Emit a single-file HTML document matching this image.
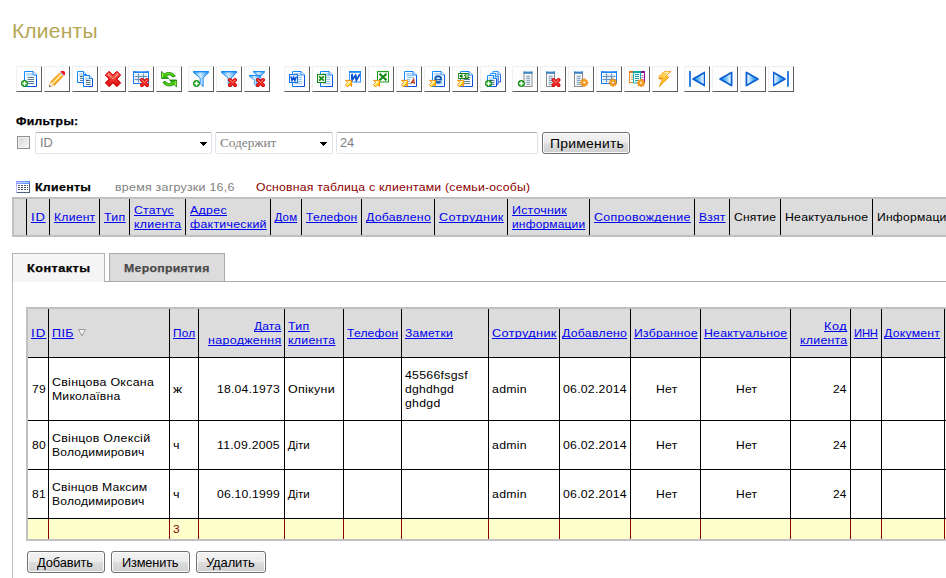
<!DOCTYPE html>
<html><head><meta charset="utf-8"><title>Клиенты</title>
<style>
html,body{margin:0;padding:0;background:#fff}
body{width:946px;height:578px;position:relative;overflow:hidden;font-family:"Liberation Sans",sans-serif}
.a,.t,.b,.vl,.hl{position:absolute}
.t{white-space:nowrap;transform-origin:0 0;text-decoration-skip-ink:none}
.b{width:24px;height:24px;top:66px;background:#fdfdfd;border:1px solid;border-color:#f0f0f0 #5e5e5e #5e5e5e #f0f0f0}
.b svg{position:absolute;left:4px;top:4px;width:16px;height:16px}
.vl{width:1px;background:#000}
.hl{height:1px;background:#000}
.rl{background:#8b0000}
.inp{position:absolute;top:132px;height:20px;border:1px solid;border-color:#abadb3 #dbdfe6 #e3e9ef #e2e3ea;border-radius:2px;background:#fff}
.btn{position:absolute;height:20px;border:1px solid #707070;border-radius:3px;box-shadow:inset 0 0 0 1px rgba(255,255,255,.85);background:linear-gradient(#f3f3f3 0%,#ebebeb 48%,#dddddd 52%,#cfcfcf 100%)}
.arr{position:absolute;width:0;height:0;border-left:3.5px solid transparent;border-right:3.5px solid transparent;border-top:4px solid #000;top:142px}
</style></head><body>
<!-- toolbar -->
<svg width="0" height="0" style="position:absolute;left:0;top:0"><defs>
<linearGradient id="gp" x1="0" y1="0" x2="1" y2="1"><stop offset="0" stop-color="#1e94ff"/><stop offset=".5" stop-color="#0a74f4"/><stop offset="1" stop-color="#0a44d2"/></linearGradient>
<linearGradient id="gpf" x1="0" y1="0" x2="0" y2="1"><stop offset="0" stop-color="#a6d3fb"/><stop offset="1" stop-color="#e6f3ff"/></linearGradient>
<linearGradient id="gx" x1="0" y1="0" x2="0" y2="1"><stop offset="0" stop-color="#ff8a78"/><stop offset=".5" stop-color="#f23a30"/><stop offset="1" stop-color="#d40a0a"/></linearGradient>
<linearGradient id="gg" x1="0" y1="0" x2="0" y2="1"><stop offset="0" stop-color="#8cf02a"/><stop offset=".5" stop-color="#4ccc08"/><stop offset="1" stop-color="#2aa800"/></linearGradient>
<linearGradient id="gf" x1="0" y1="0" x2="1" y2="0"><stop offset="0" stop-color="#2a9af5"/><stop offset=".45" stop-color="#d2ecff"/><stop offset="1" stop-color="#2a94ee"/></linearGradient>
<linearGradient id="ga" x1="0" y1="0" x2="1" y2="1"><stop offset=".1" stop-color="#ffb21a"/><stop offset=".4" stop-color="#fffbe0"/><stop offset=".6" stop-color="#ffdc00"/><stop offset=".95" stop-color="#f59000"/></linearGradient>
<linearGradient id="gpb" x1="0" y1="0" x2="0" y2="1"><stop offset="0" stop-color="#f08c00"/><stop offset=".3" stop-color="#ffc040"/><stop offset=".5" stop-color="#fff0b8"/><stop offset=".72" stop-color="#ffb42a"/><stop offset="1" stop-color="#ea8200"/></linearGradient>
<linearGradient id="gx2" gradientUnits="userSpaceOnUse" x1="-5" y1="-5" x2="5" y2="5"><stop offset="0" stop-color="#ff9080"/><stop offset=".45" stop-color="#f4403a"/><stop offset="1" stop-color="#cc0808"/></linearGradient>
<linearGradient id="gl" x1="0" y1="0" x2="1" y2="1"><stop offset="0" stop-color="#ffe27a"/><stop offset=".5" stop-color="#ffc02a"/><stop offset="1" stop-color="#ee8800"/></linearGradient>
<linearGradient id="gc" x1="0" y1="0" x2="0" y2="1"><stop offset="0" stop-color="#62aee6"/><stop offset="1" stop-color="#1a68b4"/></linearGradient>
<linearGradient id="gpe" x1="0" y1="0" x2="1" y2="1"><stop offset=".36" stop-color="#f39000"/><stop offset=".44" stop-color="#ffbe3a"/><stop offset=".5" stop-color="#fff2c0"/><stop offset=".57" stop-color="#ffb82e"/><stop offset=".64" stop-color="#ee8600"/></linearGradient>
<linearGradient id="gn" x1="0" y1="0" x2="1" y2="0"><stop offset="0" stop-color="#1f8ff0"/><stop offset=".45" stop-color="#5ab4f8"/><stop offset=".8" stop-color="#cfe9ff"/><stop offset="1" stop-color="#e8f5ff"/></linearGradient>
<radialGradient id="ggr" cx=".5" cy=".4" r=".6"><stop offset="0" stop-color="#ffb52e"/><stop offset="1" stop-color="#ee8200"/></radialGradient>
<g id="page"><path d="M.5.5H9L12.5 4V15.5H.5Z" fill="#fff" stroke="url(#gp)"/><path d="M2 2H8.5V5L11 5.5V14H2Z" fill="#f3f9ff"/><rect x="2" y="2" width="6.5" height="4" fill="url(#gpf)"/><path d="M9 .5V4H12.5" fill="#fff" stroke="#1a82f7"/><path d="M3.5 6.5H10M3.5 8.5H10M3.5 10.5H10M3.5 12.5H10" stroke="#5e7f90" stroke-width="1" fill="none"/></g>
<g id="lpage"><path d="M.5.5H9L12.5 4V15.5H.5Z" fill="#fff" stroke="url(#gp)"/><path d="M2 2H8.5V5L11 5.5V14H2Z" fill="#eef7ff"/><rect x="2" y="2" width="6.5" height="4" fill="url(#gpf)"/><path d="M9 .5V4H12.5" fill="#fff" stroke="#1a82f7"/><path d="M3 4.5H10M3 6.5H10M3 8.5H10M3 10.5H10M3 12.5H10" stroke="#86bde8" stroke-width=".8" fill="none"/></g>
<g id="spage"><path d="M.5.5H6.5L9.5 3.5V11.5H.5Z" fill="#fff" stroke="url(#gp)"/><rect x="2" y="2" width="6" height="8" fill="#e2f1fd"/><rect x="2" y="2" width="4" height="3" fill="#bfe0fb"/><path d="M6.5 .5V3.5H9.5" fill="#fff" stroke="#1a82f7"/><path d="M3 5.5H7.5M3 7.5H7.5M3 9.5H7.5" stroke="#5e7f90" fill="none"/><path d="M3 5.5H5" stroke="#4a5560"/></g>
<g id="plus"><circle cx="3.5" cy="3.5" r="3.05" fill="#1db61d" stroke="#087a08" stroke-width="1"/><path d="M3.5 1.3V5.7M1.3 3.5H5.7" stroke="#fff" stroke-width="1.35"/></g>
<g id="rx"><path d="M1.9 1.9L7.1 7.1M7.1 1.9L1.9 7.1" stroke="#cf0606" stroke-width="3.7" stroke-linecap="round"/><path d="M2 2L7 7M7 2L2 7" stroke="#ef2c26" stroke-width="2.2" stroke-linecap="round"/><path d="M2 2L4.5 4.4L7 2" stroke="#ff8a7c" stroke-width="1" stroke-linecap="round" fill="none"/></g>
<g id="arrow"><path d="M.5 .5H6.6V6.6L4.9 4.7L2.5 7.1L.3 4.9L2.7 2.5Z" fill="url(#ga)" stroke="#f08800" stroke-width=".9" stroke-linejoin="round"/></g>
<g id="funnel"><path d="M.5 .5H15.5V1.6L10.2 7V15.6L7.2 12.6V7L.5 1.6Z" fill="url(#gf)" stroke="#1585ee" stroke-width=".9" stroke-linejoin="round"/><path d="M.5 .8H15.5" stroke="#1488f2" stroke-width="1.2"/></g>
<g id="col"><rect x=".5" y="2" width="8" height="13.5" fill="#fbfdff" stroke="#8c8c8c"/><rect x="2" y="4" width="5" height="10" fill="#d4eafb"/><path d="M3 5.5H6.5M3 7.5H6.5M3 9.5H6.5M3 11.5H6.5M3 13.5H6.5" stroke="#98a2aa"/><path d="M0 0Q4.5 1.2 9 0V2.6H0Z" fill="url(#gc)"/></g>
<g id="table"><rect x=".5" y="1" width="15" height="11.5" fill="#fff" stroke="#1a7cf2"/><path d="M0 0Q8 1.4 16 0V2H0Z" fill="#1a86fa"/><rect x="2" y="3" width="12" height="8" fill="#cfe6fb"/><path d="M2 4.2H14M2 7H14M2 9.8H14M3.8 3V11M8 3V11M12.5 3V11" stroke="#eef7ff" stroke-width=".6"/><path d="M5.5 2.5V11.5M10.5 2.5V11.5M1.5 5.5H14.5M1.5 8.5H14.5" stroke="#6b93b8"/></g>
<g id="gear"><path d="M7.84 3.33 L7.84 4.67 L6.71 4.70 L6.41 5.43 L7.19 6.24 L6.24 7.19 L5.43 6.41 L4.70 6.71 L4.67 7.84 L3.33 7.84 L3.30 6.71 L2.57 6.41 L1.76 7.19 L0.81 6.24 L1.59 5.43 L1.29 4.70 L0.16 4.67 L0.16 3.33 L1.29 3.30 L1.59 2.57 L0.81 1.76 L1.76 0.81 L2.57 1.59 L3.30 1.29 L3.33 0.16 L4.67 0.16 L4.70 1.29 L5.43 1.59 L6.24 0.81 L7.19 1.76 L6.41 2.57 L6.71 3.30Z" fill="url(#ggr)" stroke="#ee8a0a" stroke-width=".6" stroke-linejoin="round"/><circle cx="4" cy="4" r="1.45" fill="#fffaf0" stroke="#e07a00" stroke-width=".5"/></g>
<g id="wbox"><rect x=".5" y=".5" width="8" height="8" fill="#eef6ff" stroke="#1a74e8"/><path d="M2 2.4L3 6.6L4.6 3.2L5.9 6.6L7.4 2.4" fill="none" stroke="#0b52d2" stroke-width="1.5" stroke-linejoin="miter"/></g>
<g id="xbox"><rect x=".5" y=".5" width="8" height="8" fill="#f2fbf0" stroke="#1a8a1a"/><path d="M2.2 2.4L6.8 6.6M6.8 2.4L2.2 6.6" fill="none" stroke="#1a8a1a" stroke-width="1.7"/></g>
<g id="tri"><path d="M14.2 1.4V14.6L2.6 8Z" fill="url(#gn)" stroke="#0b5fd2" stroke-width="1.7" stroke-linejoin="round"/></g>
</defs></svg>
<div class="b" style="left:16px"><svg viewBox="0 0 16 16"><use href="#page" transform="translate(3,0)"/><use href="#plus" transform="translate(0,9)"/></svg></div>
<div class="b" style="left:44px"><svg viewBox="0 0 16 16"><g transform="translate(0,16) rotate(-45)"><path d="M0 0L4.6 -2.7V2.7Z" fill="#ffe4c4" stroke="#e8b080" stroke-width=".3"/><path d="M0 0L1.7 -1V1Z" fill="#3a2a1a"/><rect x="4.6" y="-2.7" width="12.9" height="5.4" fill="url(#gpb)"/><rect x="17.5" y="-2.7" width="1.4" height="5.4" fill="#c2c2cc"/><path d="M18.9 -2.7H20Q21.8 -2.7 21.8 0Q21.8 2.7 20 2.7H18.9Z" fill="#ee1212"/></g></svg></div>
<div class="b" style="left:72px"><svg viewBox="0 0 16 16"><use href="#spage"/><use href="#spage" transform="translate(6,4)"/></svg></div>
<div class="b" style="left:100px"><svg viewBox="0 0 16 16"><g transform="translate(8,8) rotate(45)"><path d="M-8.7 -2.9h17.4a0 0 0 0 1 0 0v5.8h-17.4zM-2.9 -8.7h5.8v17.4h-5.8z" fill="#de0404" stroke="#de0404" stroke-width="1" stroke-linejoin="round" transform="scale(.94)"/><path d="M-7.2 -1.7h14.4v3.4h-14.4zM-1.7 -7.2h3.4v14.4h-3.4z" fill="url(#gx2)" stroke="url(#gx2)" stroke-width=".8" stroke-linejoin="round"/></g><path d="M3 3.2L8 8L13 3.2" stroke="#ffb0a0" stroke-width="1" fill="none" opacity=".6"/></svg></div>
<div class="b" style="left:128px"><svg viewBox="0 0 16 16"><use href="#table"/><use href="#rx" transform="translate(7,7)"/></svg></div>
<div class="b" style="left:156px"><svg viewBox="0 0 16 16"><path d="M.6 .4V7.4H7.7L5.4 5.2C7.2 3.3 10.2 3.4 11.6 6L14.2 5.2C12 .9 6.6 .5 3.2 3Z" fill="url(#gg)" stroke="#0c7c00" stroke-width=".8" stroke-linejoin="round"/><path d="M1.5 2.2V6.4" stroke="#b8ff70" stroke-width=".8"/><g transform="rotate(180 8.1 8.2)"><path d="M.6 .4V7.4H7.7L5.4 5.2C7.2 3.3 10.2 3.4 11.6 6L14.2 5.2C12 .9 6.6 .5 3.2 3Z" fill="url(#gg)" stroke="#0c7c00" stroke-width=".8" stroke-linejoin="round"/><path d="M1.5 2.2V6.4" stroke="#b8ff70" stroke-width=".8"/></g></svg></div>
<div class="b" style="left:188px"><svg viewBox="0 0 16 16"><use href="#funnel"/><use href="#plus" transform="translate(0,9)"/></svg></div>
<div class="b" style="left:216px"><svg viewBox="0 0 16 16"><use href="#funnel"/><use href="#rx" transform="translate(7,7)"/></svg></div>
<div class="b" style="left:244px"><svg viewBox="0 0 16 16"><use href="#funnel" transform="translate(4,0) scale(.75)"/><use href="#funnel" transform="translate(0,4) scale(.75)"/><use href="#rx" transform="translate(7,7)"/></svg></div>
<div class="b" style="left:284px"><svg viewBox="0 0 16 16"><use href="#lpage" transform="translate(3,0)"/><use href="#wbox" transform="translate(0,3)"/></svg></div>
<div class="b" style="left:312px"><svg viewBox="0 0 16 16"><use href="#lpage" transform="translate(3,0)"/><use href="#xbox" transform="translate(0,3)"/></svg></div>
<div class="b" style="left:340px"><svg viewBox="0 0 16 16"><rect x="4.5" y=".5" width="11" height="10.5" fill="#fff" stroke="#3a94fa"/><rect x="4" y="0" width="12" height="1.8" fill="#1a86fa"/><path d="M6.2 3L7.6 9L10 4.5L12 9L14.2 3" fill="none" stroke="#0b52d2" stroke-width="2" stroke-linejoin="miter" transform="translate(1.4,0) skewX(-12)"/><use href="#arrow" transform="translate(0,8.9)"/></svg></div>
<div class="b" style="left:368px"><svg viewBox="0 0 16 16"><rect x="4.5" y=".5" width="11" height="10.5" fill="#fff" stroke="#1a9a1a"/><rect x="4" y="0" width="12" height="1.2" fill="#22a822"/><path d="M6.5 2.8L13.5 9.2M13.5 2.8L6.5 9.2" fill="none" stroke="#148a14" stroke-width="2.2"/><use href="#arrow" transform="translate(0,8.9)"/></svg></div>
<div class="b" style="left:396px"><svg viewBox="0 0 16 16"><use href="#lpage" transform="translate(3,0)"/><rect x="9" y="7.6" width="5.6" height="6.2" fill="#fff" opacity=".85"/><path d="M9.6 13L12.7 8.2L13.4 13M10.7 11.3H13.2" fill="none" stroke="#c4361c" stroke-width="1.25"/><use href="#arrow" transform="translate(0,8.9)"/></svg></div>
<div class="b" style="left:424px"><svg viewBox="0 0 16 16"><use href="#lpage" transform="translate(3,0)"/><rect x="5" y="4" width="8.5" height="9.5" fill="#e4f2fe"/><circle cx="9.2" cy="8.3" r="3" fill="none" stroke="#1a5fb4" stroke-width="1.9"/><path d="M6.4 8.6H12.4" stroke="#1a5fb4" stroke-width="1.3"/><path d="M10.4 9.4H13.4V11.4Z" fill="#e4f2fe"/><path d="M6 12Q9.5 13.6 13 11.6" stroke="#3a9ae8" stroke-width="1" fill="none"/><use href="#arrow" transform="translate(0,8.9)"/></svg></div>
<div class="b" style="left:452px"><svg viewBox="0 0 16 16"><use href="#page" transform="translate(3,0)"/><rect x="1" y="2" width="10.8" height="6" rx=".6" fill="#137f13"/><path d="M0 0h1v1h-1zM1 0h1v1h-1zM2 0h1v1h-1zM0 1h1v1h-1zM0 2h1v1h-1zM0 3h1v1h-1zM1 3h1v1h-1zM2 3h1v1h-1zM4 0h1v1h-1zM5 0h1v1h-1zM6 0h1v1h-1zM4 1h1v1h-1zM5 1h1v1h-1zM5 2h1v1h-1zM6 2h1v1h-1zM4 3h1v1h-1zM5 3h1v1h-1zM6 3h1v1h-1zM8 0h1v1h-1zM10 0h1v1h-1zM8 1h1v1h-1zM10 1h1v1h-1zM8 2h1v1h-1zM10 2h1v1h-1zM9 3h1v1h-1z" fill="#fff" transform="translate(1.8,3) scale(.86,1)"/><use href="#arrow" transform="translate(0,8.9)"/></svg></div>
<div class="b" style="left:480px"><svg viewBox="0 0 16 16"><g transform="translate(7.5,0) scale(.85 .95)"><use href="#spage"/></g><g transform="translate(5,2) scale(.85 .98)"><use href="#spage"/></g><use href="#spage" transform="translate(2,4)"/><use href="#plus" transform="translate(0,9)"/></svg></div>
<div class="b" style="left:512px"><svg viewBox="0 0 16 16"><use href="#col" transform="translate(6.5,0)"/><use href="#plus" transform="translate(0.8,9)"/></svg></div>
<div class="b" style="left:540px"><svg viewBox="0 0 16 16"><use href="#col" transform="translate(1,0)"/><use href="#rx" transform="translate(6.5,7)"/></svg></div>
<div class="b" style="left:568px"><svg viewBox="0 0 16 16"><use href="#col" transform="translate(1,0)"/><use href="#gear" transform="translate(7.2,7.6)"/></svg></div>
<div class="b" style="left:596px"><svg viewBox="0 0 16 16"><use href="#table"/><use href="#gear" transform="translate(8,7.6)"/></svg></div>
<div class="b" style="left:624px"><svg viewBox="0 0 16 16"><rect x=".5" y=".5" width="5" height="11" fill="#fff" stroke="#f08a20"/><rect x="0" y="0" width="6" height="2" fill="#e87a18"/><path d="M2 4.5H4M2 6.5H4M2 8.5H4" stroke="#f0a050"/><rect x="11.5" y=".5" width="4" height="11" fill="#fff" stroke="#9a1096"/><rect x="11" y="0" width="5" height="2" fill="#8a0f8e"/><path d="M12.5 4.5H14.5M12.5 6.5H14.5M12.5 8.5H14.5" stroke="#c060c0"/><rect x="4.5" y=".5" width="7" height="11.5" fill="#e6ffff" stroke="#12b4b4"/><rect x="4" y="0" width="8" height="2" fill="#0fa6a6"/><path d="M6 3.5H10M6 5.5H10M6 7.5H10M6 9.5H10" stroke="#2a9a9a" stroke-width="1.1"/><use href="#gear" transform="translate(8,8)"/></svg></div>
<div class="b" style="left:652px"><svg viewBox="0 0 16 16"><path d="M7.2 .4H14L8.8 5.2L12 6L2.2 15.8L5.4 8H2V5.6Z" fill="url(#gl)" stroke="#f08a00" stroke-width=".7" stroke-linejoin="round"/><path d="M7.6 1.4H11.6L7.2 5.4" stroke="#fff6c8" stroke-width="1" fill="none"/><path d="M2 7.4H5.8" stroke="#d87400" stroke-width=".8"/></svg></div>
<div class="b" style="left:684px"><svg viewBox="0 0 16 16"><rect x=".3" y=".3" width="1.5" height="15.4" fill="#1474e2" stroke="#0d5fd0" stroke-width=".4"/><use href="#tri" transform="translate(1.4,0)"/></svg></div>
<div class="b" style="left:712px"><svg viewBox="0 0 16 16"><use href="#tri" transform="translate(0.4,0)"/></svg></div>
<div class="b" style="left:740px"><svg viewBox="0 0 16 16"><g transform="translate(15.6,0) scale(-1,1)"><use href="#tri"/></g></svg></div>
<div class="b" style="left:768px"><svg viewBox="0 0 16 16"><g transform="translate(14.6,0) scale(-1,1)"><use href="#tri"/></g><rect x="14.2" y=".3" width="1.5" height="15.4" fill="#1474e2" stroke="#0d5fd0" stroke-width=".4"/></svg></div>

<!-- filter row -->
<div class="a" style="left:17px;top:136px;width:11px;height:11px;border:1px solid #8e8f8f;background:linear-gradient(135deg,#d6d6d6,#f6f6f6);box-shadow:inset 0 0 0 1px #f4f4f4"></div>
<div class="inp" style="left:35px;width:175px"></div><svg class="a" style="left:200px;top:142px" width="7" height="4" shape-rendering="crispEdges"><path d="M0 0h7v1h-1v1h-1v1h-1v1h-1v-1h-1v-1h-1v-1h-1z" fill="#000"/></svg>
<div class="inp" style="left:215px;width:116px"></div><svg class="a" style="left:320px;top:142px" width="7" height="4" shape-rendering="crispEdges"><path d="M0 0h7v1h-1v1h-1v1h-1v1h-1v-1h-1v-1h-1v-1h-1z" fill="#000"/></svg>
<div class="inp" style="left:336px;width:200px"></div>
<div class="btn" style="left:542px;top:132px;width:86px"></div>
<!-- table icon -->
<svg class="a" style="left:16px;top:181px" width="14" height="12" viewBox="0 0 14 12" shape-rendering="crispEdges"><defs><linearGradient id="tig" x1="0" y1="0" x2="1" y2="0"><stop offset="0" stop-color="#9c96ff"/><stop offset=".5" stop-color="#6aa0ff"/><stop offset="1" stop-color="#4a84ff"/></linearGradient></defs><rect width="14" height="12" fill="#fff"/><rect width="14" height="3" fill="url(#tig)"/><rect x="1" y="1" width="12" height="1" fill="#cfdcff" opacity=".8"/><rect x="0" y="3" width="1" height="9" fill="#b8b8fa"/><rect x="13" y="3" width="1" height="9" fill="#4f637a"/><rect x="1" y="11" width="13" height="1" fill="#4f637a"/><g fill="#4a5a70"><rect x="2" y="4" width="2" height="1"/><rect x="5" y="4" width="2" height="1"/><rect x="8" y="4" width="2" height="1"/><rect x="11" y="4" width="1" height="1"/><rect x="2" y="6" width="2" height="1"/><rect x="5" y="6" width="2" height="1"/><rect x="8" y="6" width="2" height="1"/><rect x="11" y="6" width="1" height="1"/><rect x="2" y="8" width="2" height="1"/><rect x="5" y="8" width="2" height="1"/><rect x="8" y="8" width="2" height="1"/><rect x="11" y="8" width="1" height="1"/></g></svg>
<!-- main table -->
<div class="a" style="left:12px;top:197px;width:940px;height:36px;background:#dcdcdc;border:2px solid #c0c0c0"></div>
<div class="vl" style="left:26px;top:199px;height:36px"></div><div class="vl" style="left:49px;top:199px;height:36px"></div><div class="vl" style="left:99px;top:199px;height:36px"></div><div class="vl" style="left:129px;top:199px;height:36px"></div><div class="vl" style="left:185px;top:199px;height:36px"></div><div class="vl" style="left:270px;top:199px;height:36px"></div><div class="vl" style="left:301px;top:199px;height:36px"></div><div class="vl" style="left:361px;top:199px;height:36px"></div><div class="vl" style="left:434px;top:199px;height:36px"></div><div class="vl" style="left:507px;top:199px;height:36px"></div><div class="vl" style="left:589px;top:199px;height:36px"></div><div class="vl" style="left:694px;top:199px;height:36px"></div><div class="vl" style="left:729px;top:199px;height:36px"></div><div class="vl" style="left:780px;top:199px;height:36px"></div><div class="vl" style="left:872px;top:199px;height:36px"></div>
<!-- tabs -->
<div class="a" style="left:12px;top:281px;width:940px;height:300px;border:1px solid #bbb;border-top-color:#aaa;background:#fff"></div>
<div class="a" style="left:109px;top:253px;width:114px;height:27px;border:1px solid #aaa;background:#dcdcdc"></div>
<div class="a" style="left:12px;top:253px;width:91px;height:28px;border:1px solid #b4b4b4;border-bottom:none;background:#f5f5f5"></div>
<!-- inner table -->
<div class="a" style="left:26px;top:307px;width:930px;height:230px;border:2px solid #c0c0c0;background:#fff"></div>
<div class="a" style="left:28px;top:309px;width:930px;height:48px;background:#dcdcdc"></div>
<div class="a" style="left:28px;top:519px;width:930px;height:20px;background:#ffffcc"></div>
<div class="hl" style="left:28px;top:357px;width:930px"></div>
<div class="hl" style="left:28px;top:420px;width:930px"></div>
<div class="hl" style="left:28px;top:469px;width:930px"></div>
<div class="hl" style="left:28px;top:518px;width:930px"></div>
<div class="vl" style="left:48px;top:309px;height:210px"></div><div class="vl rl" style="left:48px;top:519px;height:20px"></div><div class="vl" style="left:169px;top:309px;height:210px"></div><div class="vl rl" style="left:169px;top:519px;height:20px"></div><div class="vl" style="left:198px;top:309px;height:210px"></div><div class="vl rl" style="left:198px;top:519px;height:20px"></div><div class="vl" style="left:284px;top:309px;height:210px"></div><div class="vl rl" style="left:284px;top:519px;height:20px"></div><div class="vl" style="left:343px;top:309px;height:210px"></div><div class="vl rl" style="left:343px;top:519px;height:20px"></div><div class="vl" style="left:401px;top:309px;height:210px"></div><div class="vl rl" style="left:401px;top:519px;height:20px"></div><div class="vl" style="left:488px;top:309px;height:210px"></div><div class="vl rl" style="left:488px;top:519px;height:20px"></div><div class="vl" style="left:559px;top:309px;height:210px"></div><div class="vl rl" style="left:559px;top:519px;height:20px"></div><div class="vl" style="left:630px;top:309px;height:210px"></div><div class="vl rl" style="left:630px;top:519px;height:20px"></div><div class="vl" style="left:700px;top:309px;height:210px"></div><div class="vl rl" style="left:700px;top:519px;height:20px"></div><div class="vl" style="left:790px;top:309px;height:210px"></div><div class="vl rl" style="left:790px;top:519px;height:20px"></div><div class="vl" style="left:850px;top:309px;height:210px"></div><div class="vl rl" style="left:850px;top:519px;height:20px"></div><div class="vl" style="left:881px;top:309px;height:210px"></div><div class="vl rl" style="left:881px;top:519px;height:20px"></div><div class="vl" style="left:944px;top:309px;height:210px"></div><div class="vl rl" style="left:944px;top:519px;height:20px"></div>
<svg class="a" style="left:77px;top:328px" width="11" height="10" viewBox="0 0 11 10"><path d="M1.5 1.5 L8.5 1.5 L5 8 Z" fill="#f0f0f0" stroke="#9a9a9a" stroke-width="1"/></svg>
<!-- bottom buttons -->
<div class="btn" style="left:27px;top:551px;width:76px"></div>
<div class="btn" style="left:111px;top:551px;width:77px"></div>
<div class="btn" style="left:196px;top:551px;width:68px"></div>
<span class="t" style="left:11.90px;top:16.62px;font-size:21px;line-height:27px;letter-spacing:0.230px;color:#b5a755;">Клиенты</span>
<span class="t" style="left:15.80px;top:113.52px;font-size:11.5px;line-height:15px;letter-spacing:0.265px;color:#000;font-weight:bold;-webkit-text-stroke:.25px #000;transform:scaleX(1.0648);">Фильтры:</span>
<span class="t" style="left:39.90px;top:134.00px;font-size:13px;line-height:17px;letter-spacing:-0.107px;color:#808080;transform:scaleX(0.9850);">ID</span>
<span class="t" style="left:220.00px;top:134.01px;font-size:13.3px;line-height:17px;letter-spacing:-0.040px;color:#808080;font-family:'Liberation Serif',serif;">Содержит</span>
<span class="t" style="left:340.20px;top:134.00px;font-size:13px;line-height:17px;letter-spacing:-0.131px;color:#808080;transform:scaleX(0.9834);">24</span>
<span class="t" style="left:549.50px;top:134.89px;font-size:13.3px;line-height:17px;letter-spacing:0.212px;color:#000;transform:scaleX(1.0481);">Применить</span>
<span class="t" style="left:34.90px;top:179.52px;font-size:11.5px;line-height:15px;letter-spacing:0.309px;color:#000;font-weight:bold;-webkit-text-stroke:.25px #000;transform:scaleX(1.0738);">Клиенты</span>
<span class="t" style="left:114.50px;top:179.52px;font-size:11.5px;line-height:15px;letter-spacing:0.232px;color:#808080;transform:scaleX(1.0787);">время загрузки 16,6</span>
<span class="t" style="left:256.20px;top:179.52px;font-size:11.5px;line-height:15px;letter-spacing:0.200px;color:#8b0000;transform:scaleX(1.0650);">Основная таблица с клиентами (семьи-особы)</span>
<span class="t" style="left:31.00px;top:209.52px;font-size:11.5px;line-height:15px;letter-spacing:0.712px;color:#0000ee;text-decoration:underline;transform:scaleX(1.1300);">ID</span>
<span class="t" style="left:53.90px;top:209.52px;font-size:11.5px;line-height:15px;letter-spacing:0.221px;color:#0000ee;text-decoration:underline;transform:scaleX(1.0574);">Клиент</span>
<span class="t" style="left:103.80px;top:209.52px;font-size:11.5px;line-height:15px;letter-spacing:0.347px;color:#0000ee;text-decoration:underline;transform:scaleX(1.0722);">Тип</span>
<span class="t" style="left:133.80px;top:202.52px;font-size:11.5px;line-height:15px;letter-spacing:0.221px;color:#0000ee;text-decoration:underline;transform:scaleX(1.0597);">Статус</span>
<span class="t" style="left:133.80px;top:216.52px;font-size:11.5px;line-height:15px;letter-spacing:0.252px;color:#0000ee;text-decoration:underline;transform:scaleX(1.0706);">клиента</span>
<span class="t" style="left:189.60px;top:202.52px;font-size:11.5px;line-height:15px;letter-spacing:0.306px;color:#0000ee;text-decoration:underline;transform:scaleX(1.0743);">Адрес</span>
<span class="t" style="left:189.60px;top:216.52px;font-size:11.5px;line-height:15px;letter-spacing:0.253px;color:#0000ee;text-decoration:underline;transform:scaleX(1.0734);">фактический</span>
<span class="t" style="left:274.50px;top:209.52px;font-size:11.5px;line-height:15px;letter-spacing:0.183px;color:#0000ee;text-decoration:underline;">Дом</span>
<span class="t" style="left:305.70px;top:209.52px;font-size:11.5px;line-height:15px;letter-spacing:0.194px;color:#0000ee;text-decoration:underline;transform:scaleX(1.0474);">Телефон</span>
<span class="t" style="left:365.50px;top:209.52px;font-size:11.5px;line-height:15px;letter-spacing:0.245px;color:#0000ee;text-decoration:underline;transform:scaleX(1.0660);">Добавлено</span>
<span class="t" style="left:438.60px;top:209.52px;font-size:11.5px;line-height:15px;letter-spacing:0.339px;color:#0000ee;text-decoration:underline;transform:scaleX(1.0992);">Сотрудник</span>
<span class="t" style="left:511.70px;top:202.52px;font-size:11.5px;line-height:15px;letter-spacing:0.260px;color:#0000ee;text-decoration:underline;transform:scaleX(1.0740);">Источник</span>
<span class="t" style="left:511.70px;top:216.52px;font-size:11.5px;line-height:15px;letter-spacing:0.162px;color:#0000ee;text-decoration:underline;transform:scaleX(1.0410);">информации</span>
<span class="t" style="left:593.70px;top:209.52px;font-size:11.5px;line-height:15px;letter-spacing:0.283px;color:#0000ee;text-decoration:underline;transform:scaleX(1.0791);">Сопровождение</span>
<span class="t" style="left:698.80px;top:209.52px;font-size:11.5px;line-height:15px;letter-spacing:0.196px;color:#0000ee;text-decoration:underline;transform:scaleX(1.0469);">Взят</span>
<span class="t" style="left:733.70px;top:209.52px;font-size:11.5px;line-height:15px;letter-spacing:0.201px;color:#000;transform:scaleX(1.0503);">Снятие</span>
<span class="t" style="left:784.80px;top:209.52px;font-size:11.5px;line-height:15px;letter-spacing:0.229px;color:#000;transform:scaleX(1.0661);">Неактуальное</span>
<span class="t" style="left:876.70px;top:209.52px;font-size:11.5px;line-height:15px;letter-spacing:0.210px;color:#000;transform:scaleX(1.0524);">Информация</span>
<span class="t" style="left:26.80px;top:260.52px;font-size:11.5px;line-height:15px;letter-spacing:0.397px;color:#000;font-weight:bold;-webkit-text-stroke:.25px #000;transform:scaleX(1.1051);">Контакты</span>
<span class="t" style="left:124.20px;top:260.52px;font-size:11.5px;line-height:15px;letter-spacing:0.266px;color:#4a4a4a;font-weight:bold;-webkit-text-stroke:.25px #4a4a4a;transform:scaleX(1.0683);">Мероприятия</span>
<span class="t" style="left:31.00px;top:325.52px;font-size:11.5px;line-height:15px;letter-spacing:0.846px;color:#0000ee;text-decoration:underline;transform:scaleX(1.1583);">ID</span>
<span class="t" style="left:51.90px;top:325.52px;font-size:11.5px;line-height:15px;letter-spacing:0.401px;color:#0000ee;text-decoration:underline;transform:scaleX(1.0849);">ПІБ</span>
<span class="t" style="left:172.70px;top:325.52px;font-size:11.5px;line-height:15px;letter-spacing:0.182px;color:#0000ee;text-decoration:underline;transform:scaleX(1.0331);">Пол</span>
<span class="t" style="left:253.90px;top:318.52px;font-size:11.5px;line-height:15px;letter-spacing:0.172px;color:#0000ee;text-decoration:underline;transform:scaleX(1.0391);">Дата</span>
<span class="t" style="left:207.70px;top:332.52px;font-size:11.5px;line-height:15px;letter-spacing:0.294px;color:#0000ee;text-decoration:underline;transform:scaleX(1.0818);">народження</span>
<span class="t" style="left:287.80px;top:318.52px;font-size:11.5px;line-height:15px;letter-spacing:0.347px;color:#0000ee;text-decoration:underline;transform:scaleX(1.0722);">Тип</span>
<span class="t" style="left:287.80px;top:332.52px;font-size:11.5px;line-height:15px;letter-spacing:0.252px;color:#0000ee;text-decoration:underline;transform:scaleX(1.0706);">клиента</span>
<span class="t" style="left:346.70px;top:325.52px;font-size:11.5px;line-height:15px;letter-spacing:0.194px;color:#0000ee;text-decoration:underline;transform:scaleX(1.0474);">Телефон</span>
<span class="t" style="left:404.50px;top:325.52px;font-size:11.5px;line-height:15px;letter-spacing:0.205px;color:#0000ee;text-decoration:underline;transform:scaleX(1.0549);">Заметки</span>
<span class="t" style="left:491.80px;top:325.52px;font-size:11.5px;line-height:15px;letter-spacing:0.339px;color:#0000ee;text-decoration:underline;transform:scaleX(1.0992);">Сотрудник</span>
<span class="t" style="left:562.40px;top:325.52px;font-size:11.5px;line-height:15px;letter-spacing:0.253px;color:#0000ee;text-decoration:underline;transform:scaleX(1.0682);">Добавлено</span>
<span class="t" style="left:633.50px;top:325.52px;font-size:11.5px;line-height:15px;letter-spacing:0.220px;color:#0000ee;text-decoration:underline;transform:scaleX(1.0593);">Избранное</span>
<span class="t" style="left:703.80px;top:325.52px;font-size:11.5px;line-height:15px;letter-spacing:0.229px;color:#0000ee;text-decoration:underline;transform:scaleX(1.0661);">Неактуальное</span>
<span class="t" style="left:824.10px;top:318.52px;font-size:11.5px;line-height:15px;letter-spacing:0.497px;color:#0000ee;text-decoration:underline;transform:scaleX(1.1042);">Код</span>
<span class="t" style="left:799.60px;top:332.52px;font-size:11.5px;line-height:15px;letter-spacing:0.252px;color:#0000ee;text-decoration:underline;transform:scaleX(1.0706);">клиента</span>
<span class="t" style="left:853.90px;top:325.52px;font-size:11.5px;line-height:15px;letter-spacing:-0.160px;color:#0000ee;text-decoration:underline;transform:scaleX(0.9767);">ИНН</span>
<span class="t" style="left:884.40px;top:325.52px;font-size:11.5px;line-height:15px;letter-spacing:0.230px;color:#0000ee;text-decoration:underline;transform:scaleX(1.0622);">Документ</span>
<span class="t" style="left:31.50px;top:381.52px;font-size:11.5px;line-height:15px;letter-spacing:0.334px;color:#000;transform:scaleX(1.0510);">79</span>
<span class="t" style="left:51.90px;top:374.52px;font-size:11.5px;line-height:15px;letter-spacing:0.258px;color:#000;transform:scaleX(1.0799);">Свінцова Оксана</span>
<span class="t" style="left:51.90px;top:388.52px;font-size:11.5px;line-height:15px;letter-spacing:0.210px;color:#000;transform:scaleX(1.0596);">Миколаївна</span>
<span class="t" style="left:172.70px;top:381.52px;font-size:11.5px;line-height:15px;letter-spacing:0.000px;color:#000;transform:scaleX(1.1769);">ж</span>
<span class="t" style="left:217.40px;top:381.52px;font-size:11.5px;line-height:15px;letter-spacing:0.189px;color:#000;transform:scaleX(1.0580);">18.04.1973</span>
<span class="t" style="left:287.80px;top:381.52px;font-size:11.5px;line-height:15px;letter-spacing:0.284px;color:#000;transform:scaleX(1.0828);">Опікуни</span>
<span class="t" style="left:404.50px;top:367.92px;font-size:11.5px;line-height:15px;letter-spacing:0.233px;color:#000;transform:scaleX(1.0743);">45566fsgsf</span>
<span class="t" style="left:404.50px;top:381.92px;font-size:11.5px;line-height:15px;letter-spacing:0.216px;color:#000;transform:scaleX(1.0569);">dghdhgd</span>
<span class="t" style="left:404.50px;top:395.92px;font-size:11.5px;line-height:15px;letter-spacing:0.264px;color:#000;transform:scaleX(1.0653);">ghdgd</span>
<span class="t" style="left:491.80px;top:381.52px;font-size:11.5px;line-height:15px;letter-spacing:0.276px;color:#000;transform:scaleX(1.0700);">admin</span>
<span class="t" style="left:563.20px;top:381.52px;font-size:11.5px;line-height:15px;letter-spacing:0.220px;color:#000;transform:scaleX(1.0682);">06.02.2014</span>
<span class="t" style="left:655.90px;top:381.52px;font-size:11.5px;line-height:15px;letter-spacing:0.283px;color:#000;transform:scaleX(1.0566);">Нет</span>
<span class="t" style="left:736.00px;top:381.52px;font-size:11.5px;line-height:15px;letter-spacing:0.235px;color:#000;transform:scaleX(1.0467);">Нет</span>
<span class="t" style="left:833.30px;top:381.52px;font-size:11.5px;line-height:15px;letter-spacing:0.238px;color:#000;transform:scaleX(1.0357);">24</span>
<span class="t" style="left:491.80px;top:437.52px;font-size:11.5px;line-height:15px;letter-spacing:0.276px;color:#000;transform:scaleX(1.0700);">admin</span>
<span class="t" style="left:563.20px;top:437.52px;font-size:11.5px;line-height:15px;letter-spacing:0.220px;color:#000;transform:scaleX(1.0682);">06.02.2014</span>
<span class="t" style="left:655.90px;top:437.52px;font-size:11.5px;line-height:15px;letter-spacing:0.283px;color:#000;transform:scaleX(1.0566);">Нет</span>
<span class="t" style="left:736.00px;top:437.52px;font-size:11.5px;line-height:15px;letter-spacing:0.235px;color:#000;transform:scaleX(1.0467);">Нет</span>
<span class="t" style="left:833.30px;top:437.52px;font-size:11.5px;line-height:15px;letter-spacing:0.238px;color:#000;transform:scaleX(1.0357);">24</span>
<span class="t" style="left:491.80px;top:486.52px;font-size:11.5px;line-height:15px;letter-spacing:0.276px;color:#000;transform:scaleX(1.0700);">admin</span>
<span class="t" style="left:563.20px;top:486.52px;font-size:11.5px;line-height:15px;letter-spacing:0.220px;color:#000;transform:scaleX(1.0682);">06.02.2014</span>
<span class="t" style="left:655.90px;top:486.52px;font-size:11.5px;line-height:15px;letter-spacing:0.283px;color:#000;transform:scaleX(1.0566);">Нет</span>
<span class="t" style="left:736.00px;top:486.52px;font-size:11.5px;line-height:15px;letter-spacing:0.235px;color:#000;transform:scaleX(1.0467);">Нет</span>
<span class="t" style="left:833.30px;top:486.52px;font-size:11.5px;line-height:15px;letter-spacing:0.238px;color:#000;transform:scaleX(1.0357);">24</span>
<span class="t" style="left:31.50px;top:437.52px;font-size:11.5px;line-height:15px;letter-spacing:0.334px;color:#000;transform:scaleX(1.0510);">80</span>
<span class="t" style="left:51.90px;top:430.52px;font-size:11.5px;line-height:15px;letter-spacing:0.250px;color:#000;transform:scaleX(1.0804);">Свінцов Олексій</span>
<span class="t" style="left:51.90px;top:444.52px;font-size:11.5px;line-height:15px;letter-spacing:0.189px;color:#000;transform:scaleX(1.0518);">Володимирович</span>
<span class="t" style="left:173.20px;top:437.52px;font-size:11.5px;line-height:15px;letter-spacing:0.000px;color:#000;transform:scaleX(1.0867);">ч</span>
<span class="t" style="left:217.40px;top:437.52px;font-size:11.5px;line-height:15px;letter-spacing:0.218px;color:#000;transform:scaleX(1.0687);">11.09.2005</span>
<span class="t" style="left:287.80px;top:437.52px;font-size:11.5px;line-height:15px;letter-spacing:-0.016px;color:#000;">Діти</span>
<span class="t" style="left:31.50px;top:486.52px;font-size:11.5px;line-height:15px;letter-spacing:0.334px;color:#000;transform:scaleX(1.0510);">81</span>
<span class="t" style="left:51.90px;top:479.52px;font-size:11.5px;line-height:15px;letter-spacing:0.210px;color:#000;transform:scaleX(1.0619);">Свінцов Максим</span>
<span class="t" style="left:51.90px;top:493.52px;font-size:11.5px;line-height:15px;letter-spacing:0.189px;color:#000;transform:scaleX(1.0518);">Володимирович</span>
<span class="t" style="left:173.20px;top:486.52px;font-size:11.5px;line-height:15px;letter-spacing:0.000px;color:#000;transform:scaleX(1.0867);">ч</span>
<span class="t" style="left:217.40px;top:486.52px;font-size:11.5px;line-height:15px;letter-spacing:0.189px;color:#000;transform:scaleX(1.0580);">06.10.1999</span>
<span class="t" style="left:287.80px;top:486.52px;font-size:11.5px;line-height:15px;letter-spacing:-0.016px;color:#000;">Діти</span>
<span class="t" style="left:172.70px;top:521.52px;font-size:11.5px;line-height:15px;letter-spacing:0.000px;color:#8b0000;transform:scaleX(1.0400);">3</span>
<span class="t" style="left:37.20px;top:553.89px;font-size:13.3px;line-height:17px;letter-spacing:-0.148px;color:#000;transform:scaleX(0.9683);">Добавить</span>
<span class="t" style="left:122.20px;top:553.89px;font-size:13.3px;line-height:17px;letter-spacing:-0.181px;color:#000;transform:scaleX(0.9622);">Изменить</span>
<span class="t" style="left:206.40px;top:553.89px;font-size:13.3px;line-height:17px;letter-spacing:-0.118px;color:#000;transform:scaleX(0.9748);">Удалить</span>
</body></html>
